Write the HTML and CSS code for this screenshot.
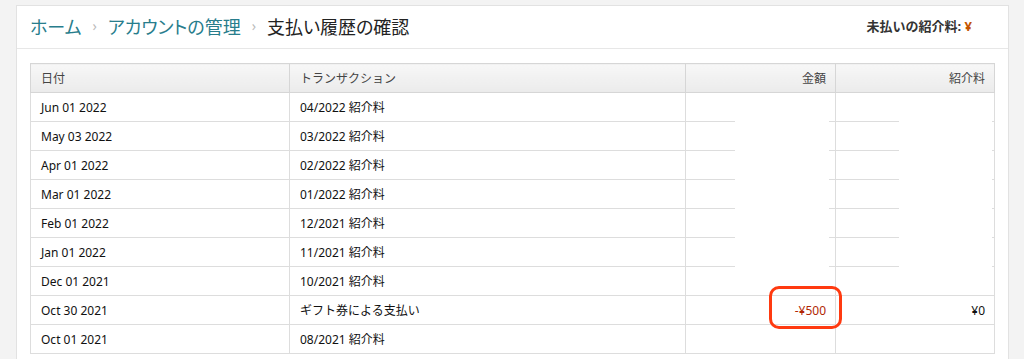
FILE: index.html
```html
<!DOCTYPE html>
<html lang="ja">
<head>
    <meta charset="UTF-8">
    <title>支払い履歴の確認</title>
    <link rel="stylesheet" href="styles.css">
</head>
<body>
    <div class="panel">
        <div class="panel-header">
            <div class="breadcrumb">
                <a class="crumb-link" href="#">ホーム</a>
                <span class="crumb-sep">›</span>
                <a class="crumb-link" href="#">アカウントの管理</a>
                <span class="crumb-sep">›</span>
                <span class="crumb-current">支払い履歴の確認</span>
            </div>
            <div class="unpaid">未払いの紹介料: <span class="unpaid-value">¥</span></div>
        </div>

        <div class="table-wrap">
            <table class="history">
                <colgroup>
                    <col class="col-date">
                    <col class="col-tx">
                    <col class="col-amount">
                    <col class="col-fee">
                </colgroup>
                <thead>
                    <tr>
                        <th>日付</th>
                        <th>トランザクション</th>
                        <th class="num">金額</th>
                        <th class="num">紹介料</th>
                    </tr>
                </thead>
                <tbody>
                    <tr><td>Jun 01 2022</td><td>04/2022 紹介料</td><td></td><td></td></tr>
                    <tr><td>May 03 2022</td><td>03/2022 紹介料</td><td></td><td></td></tr>
                    <tr><td>Apr 01 2022</td><td>02/2022 紹介料</td><td></td><td></td></tr>
                    <tr><td>Mar 01 2022</td><td>01/2022 紹介料</td><td></td><td></td></tr>
                    <tr><td>Feb 01 2022</td><td>12/2021 紹介料</td><td></td><td></td></tr>
                    <tr><td>Jan 01 2022</td><td>11/2021 紹介料</td><td></td><td></td></tr>
                    <tr><td>Dec 01 2021</td><td>10/2021 紹介料</td><td></td><td></td></tr>
                    <tr><td>Oct 30 2021</td><td>ギフト券による支払い</td><td class="num negative">-¥500</td><td class="num">¥0</td></tr>
                    <tr><td>Oct 01 2021</td><td>08/2021 紹介料</td><td></td><td></td></tr>
                </tbody>
            </table>
            <!-- blanked-out figures -->
            <div class="mask mask-amount"></div>
            <div class="mask mask-fee"></div>
            <!-- hand-drawn marker -->
            <div class="marker"></div>
        </div>
    </div>
</body>
</html>
```

FILE: styles.css
```css
body {
    font-family: "Noto Sans", "Noto Sans CJK JP", sans-serif;
    background: #f3f3f3;
    margin: 0;
    padding: 5px 15px 0 16px;
    color: #111;
}
.panel {
    background: white;
    border: 1px solid #e2e2e2;
    border-bottom: none;
    height: 360px;
    box-sizing: border-box;
}
.panel-header {
    display: flex;
    justify-content: space-between;
    align-items: center;
    height: 42px;
    padding: 0 36px 0 13px;
    border-bottom: 1px solid #e7e7e7;
}
.breadcrumb {
    font-size: 18px;
    font-feature-settings: "palt";
    display: flex;
    align-items: center;
    gap: 11px;
    margin-top: -3px;
}
.crumb-link {
    color: #287d8c;
    text-decoration: none;
}
.crumb-sep {
    color: #bbb;
    font-size: 14px;
}
.crumb-current {
    color: #222;
}
.unpaid {
    font-size: 13px;
    font-weight: bold;
    color: #333;
    margin-top: -4px;
}
.unpaid-value {
    color: #c45500;
}
.table-wrap {
    position: relative;
    margin: 14px 15px 0 13px;
}
.history {
    width: 100%;
    border-collapse: collapse;
    table-layout: fixed;
    font-size: 12px;
}
.col-date { width: 259px; }
.col-tx { width: 396px; }
.col-amount { width: 150px; }
.col-fee { width: 159px; }
.history th,
.history td {
    border: 1px solid #ddd;
    height: 29px;
    padding: 0 9px 0 10px;
    text-align: left;
    box-sizing: border-box;
    white-space: nowrap;
}
.history th {
    font-weight: normal;
    color: #444;
    background: linear-gradient(#f7f7f7, #ebebeb);
    border-color: #d6d6d6;
}
.history .num {
    text-align: right;
}
.negative {
    color: #b12704;
}
.mask {
    position: absolute;
    top: 31px;
    height: 196px;
    background: white;
}
.mask-amount {
    left: 705px;
    width: 94px;
}
.mask-fee {
    left: 869px;
    width: 93px;
}
.marker {
    position: absolute;
    left: 739px;
    top: 223px;
    width: 73px;
    height: 43px;
    box-sizing: border-box;
    border: 3px solid #ff3a10;
    border-radius: 10px;
}
```
